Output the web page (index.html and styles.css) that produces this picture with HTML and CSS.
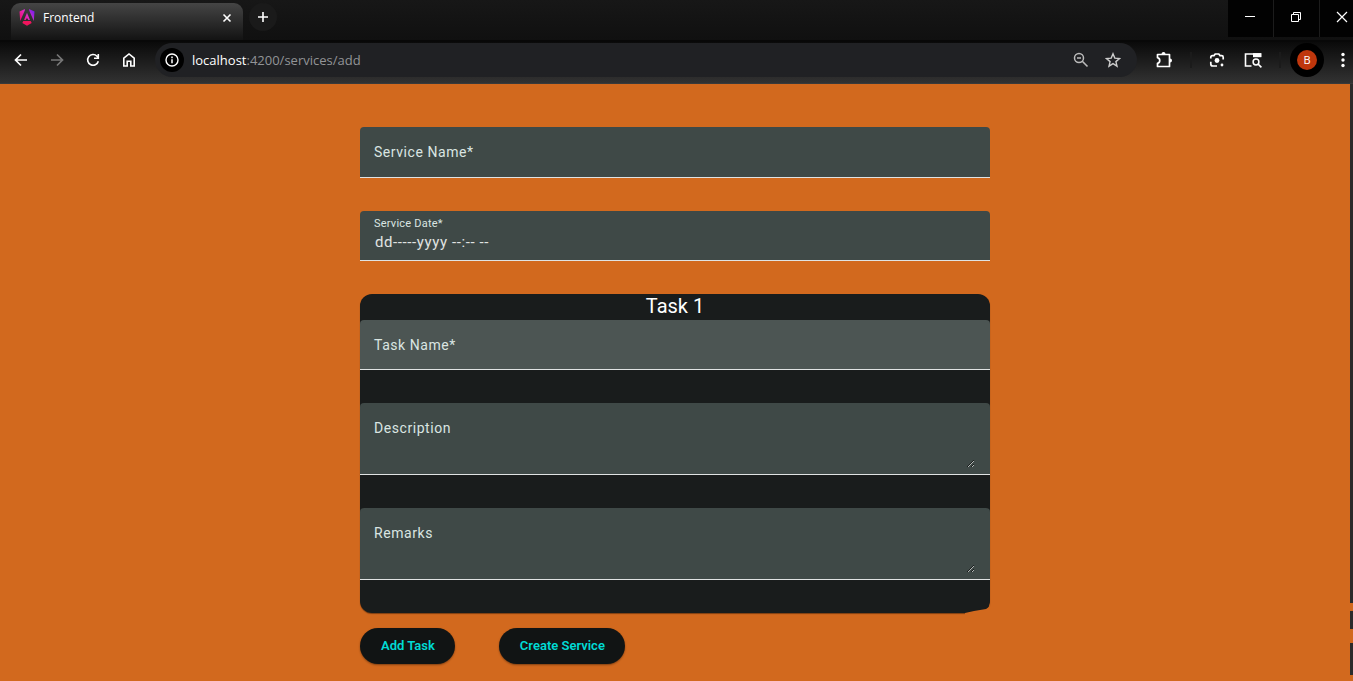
FILE: index.html
```html
<!DOCTYPE html>
<html lang="en">
<head>
<meta charset="utf-8">
<title>Frontend</title>
<link rel="stylesheet" href="styles.css">
</head>
<body>
<header class="browser">
  <div class="tabstrip">
    <div class="tab">
      <svg class="tab-logo" width="16" height="17" viewBox="0 0 16 17" aria-hidden="true">
        <defs><linearGradient id="ng" x1="0" y1="0.6" x2="1" y2="0.1"><stop offset="0" stop-color="#f0107c"/><stop offset="0.45" stop-color="#e02fc4"/><stop offset="1" stop-color="#6a1cf0"/></linearGradient></defs>
        <path fill="url(#ng)" d="M6 0 0.5 2.6 1.2 12 5.8 1.4zM10 0l5.5 2.6L14.8 12 10.2 1.4zM8 3.8 5 11h1.8l.6-1.6h1.2L9.2 11H11z"/>
        <path fill="#f0145c" d="M4.3 12h7.4l1 2L8 16.8 3.3 14z"/>
      </svg>
      <span class="tab-title">Frontend</span>
      <button class="icon-btn tab-close" aria-label="Close tab"><svg width="10" height="10" viewBox="0 0 10 10"><path d="M1.5 1.5l7 7M8.5 1.5l-7 7" stroke="#fff" stroke-width="1.6"/></svg></button>
    </div>
    <button class="icon-btn new-tab" aria-label="New tab"><svg width="12" height="12" viewBox="0 0 12 12"><path d="M6 1v10M1 6h10" stroke="#fff" stroke-width="1.6"/></svg></button>
    <div class="window-controls">
      <button class="win-btn" aria-label="Minimize"><svg width="12" height="12" viewBox="0 0 12 12"><path d="M1 5.5h10" stroke="#fff"/></svg></button>
      <button class="win-btn" aria-label="Restore"><svg width="12" height="12" viewBox="0 0 12 12"><path d="M1.5 3.500h7v7h-7zM3.500 3.500v-2h7v7h-2" fill="none" stroke="#fff"/></svg></button>
      <button class="win-btn win-close" aria-label="Close"><svg width="12" height="12" viewBox="0 0 12 12"><path d="M1 1l10 10M11 1L1 11" stroke="#fff" stroke-width="1.2"/></svg></button>
    </div>
  </div>
  <div class="toolbar">
    <nav class="nav" aria-label="Browser">
      <button class="icon-btn" aria-label="Back"><svg width="16" height="16" viewBox="0 0 16 16"><path d="M14 8H3M8 2.500 2.500 8 8 13.500" fill="none" stroke="#fff" stroke-width="1.700"/></svg></button>
      <button class="icon-btn" aria-label="Forward"><svg width="16" height="16" viewBox="0 0 16 16"><path d="M2 8h11M8 2.500 13.500 8 8 13.500" fill="none" stroke="#777" stroke-width="1.700"/></svg></button>
      <button class="icon-btn" aria-label="Reload"><svg width="16" height="16" viewBox="0 0 16 16"><path d="M13.300 9.200a5.400 5.400 0 1 1-1.300-5L13.500 5.800M13.300 2v4.300H9" fill="none" stroke="#fff" stroke-width="1.600"/></svg></button>
      <button class="icon-btn" aria-label="Home"><svg width="16" height="16" viewBox="0 0 16 16"><path d="M2.800 14V6.200L8 2l5.200 4.200V14H9.800V9.200H6.200V14z" fill="none" stroke="#fff" stroke-width="1.600"/></svg></button>
    </nav>
    <div class="address">
      <button class="site-info" aria-label="Site information"><svg width="14" height="14" viewBox="0 0 14 14"><circle cx="7" cy="7" r="6" fill="none" stroke="#fff" stroke-width="1.400"/><path d="M7 6.200V10.200M7 3.600v1.600" stroke="#fff" stroke-width="1.500"/></svg></button>
      <span class="url"><b>localhost</b>:4200/services/add</span>
      <button class="icon-btn small" aria-label="Zoom"><svg width="16" height="16" viewBox="0 0 16 16"><circle cx="6" cy="6" r="4.500" fill="none" stroke="#bbb" stroke-width="1.500"/><path d="M9.300 9.300l5.200 5.200M4 6h4" stroke="#bbb" stroke-width="1.600"/></svg></button>
      <button class="icon-btn small" aria-label="Bookmark"><svg width="16" height="16" viewBox="0 0 16 16"><path d="M8 1.800l1.800 4.300 4.700.4-3.600 3.100 1.100 4.600L8 11.700l-4 2.500 1.100-4.600L1.500 6.500l4.700-.4z" fill="none" stroke="#ccc" stroke-width="1.400"/></svg></button>
    </div>
    <div class="tools">
      <button class="icon-btn" aria-label="Extensions"><svg width="18" height="18" viewBox="0 0 18 18"><path d="M2.500 3.500h12v12h-12v-3.200c3-.5 3-5 0-5.600z" fill="none" stroke="#fff" stroke-width="1.700" stroke-linejoin="round"/><path d="M6.500 3a2 2 0 0 1 4 0zM15 7.500a2 2 0 0 1 0 4z" fill="#fff"/></svg></button>
      <span class="divider"></span>
      <button class="icon-btn lens" aria-label="Search with Lens"><svg width="16" height="16" viewBox="0 0 16 16"><path d="M1.800 6.500V5.200Q1.800 3.600 3.400 3.600H5L6.200 2h3.600L11 3.600h1.600Q14.200 3.600 14.200 5.200V7.500M1.800 9.800v2.200Q1.800 14 3.800 14H8" fill="none" stroke="#fff" stroke-width="1.700"/><circle cx="8" cy="8.500" r="2.400" fill="#fff"/><circle cx="13" cy="13" r="1.400" fill="#fff"/></svg></button>
      <button class="icon-btn" aria-label="Side search"><svg width="18" height="16" viewBox="0 0 18 16"><path d="M7.500 14H1.500V2H16.500v3" fill="none" stroke="#fff" stroke-width="1.600"/><path d="M9 1.200h8.300v4H9z" fill="#fff"/><circle cx="12" cy="10" r="2.900" fill="none" stroke="#fff" stroke-width="1.500"/><path d="M14 12l3.400 3.400" stroke="#fff" stroke-width="1.700"/></svg></button>
      <span class="divider"></span>
      <button class="profile" aria-label="Profile"><span class="avatar">B</span></button>
      <button class="icon-btn menu" aria-label="Menu"><svg width="4" height="16" viewBox="0 0 4 16" fill="#fff"><circle cx="2" cy="2.500" r="1.700"/><circle cx="2" cy="8" r="1.700"/><circle cx="2" cy="13.500" r="1.700"/></svg></button>
    </div>
  </div>
</header>
<div class="viewport">
  <main class="page">
    <form class="service-form">
      <div class="field field-lead">
        <label class="field-label" for="service-name">Service Name*</label>
        <input class="field-input" id="service-name" type="text">
      </div>
      <div class="field">
        <label class="field-label floated" for="service-date">Service Date*</label>
        <input class="field-input dated" id="service-date" type="text" value="dd-----yyyy --:-- --">
      </div>
      <section class="task-card">
        <h2 class="task-title">Task 1</h2>
        <div class="task-fields">
          <div class="field active">
            <label class="field-label" for="task-name">Task Name*</label>
            <input class="field-input" id="task-name" type="text">
          </div>
          <div class="field area">
            <label class="field-label" for="description">Description</label>
            <textarea class="field-input" id="description"></textarea>
          </div>
          <div class="field area">
            <label class="field-label" for="remarks">Remarks</label>
            <textarea class="field-input" id="remarks"></textarea>
          </div>
        </div>
      </section>
      <div class="actions">
        <button class="action" type="button">Add Task</button>
        <button class="action" type="button">Create Service</button>
      </div>
    </form>
  </main>
  <div class="edge" aria-hidden="true">
    <span class="edge-main"></span><span class="edge-mid"></span><span class="edge-low"></span>
  </div>
</div>
</body>
</html>
```
FILE: styles.css
```css
* { box-sizing: border-box; }
body {
  margin: 0;
  min-height: 100vh;
  display: flex;
  flex-direction: column;
  background: #d2691e;
  font-family: Roboto, "Liberation Sans", sans-serif;
}
button { border: 0; padding: 0; background: none; font: inherit; }
svg { display: block; }

/* Browser chrome */
.browser { font-family: "Open Sans", "Noto Sans", sans-serif; color: #fff; }
.tabstrip {
  display: flex;
  height: 42px;
  padding-left: 11px;
  background: linear-gradient(#171717, #101010);
  border-bottom: 2px solid #080808;
}
.tab {
  display: flex;
  align-items: center;
  width: 232px;
  height: 37px;
  margin-top: 3px;
  padding: 0 6px 8px 8px;
  border-radius: 9px 9px 0 0;
  background: linear-gradient(#454545, #131313);
}
.tab-title { flex: 1; margin-left: 8px; font-size: 12px; line-height: 16px; }
.icon-btn { display: flex; align-items: center; justify-content: center; width: 36px; height: 34px; }
.tab-close { width: 20px; height: 20px; }
.new-tab { width: 28px; height: 28px; margin: 3px 0 0 6px; border-radius: 50%; background: #1a1a1a; }
.window-controls { display: flex; gap: 1px; margin-left: auto; height: 37px; background: #1c1c1c; }
.win-btn { display: flex; align-items: center; justify-content: center; width: 45px; padding: 0 2px 4px 0; background: #020202; }
.win-close { width: 33px; padding: 0 0 4px 11px; }
.toolbar {
  display: flex;
  height: 42px;
  padding: 1px 0 6px 3px;
  background: linear-gradient(#0a0a0a, #323232);
  border-bottom: 1px solid #3a3a3a;
}
.nav { display: flex; }
.address {
  flex: 1;
  display: flex;
  align-items: center;
  margin-left: 8px;
  padding: 0 8px 0 5px;
  border-radius: 17px;
  background: #202124;
}
.site-info { display: flex; align-items: center; justify-content: center; width: 24px; height: 24px; border-radius: 50%; background: #000; }
.url { flex: 1; margin-left: 8px; font-size: 13px; line-height: 20px; color: #929497; }
.url b { font-weight: 400; color: #fff; }
.small { width: 32px; }
.tools { display: flex; align-items: center; padding-left: 9px; }
.divider { width: 2px; height: 16px; margin: 0 8px; background: #1b1b1b; }
.lens { margin-left: -1px; }
.profile { display: flex; align-items: center; justify-content: center; width: 34px; height: 34px; margin-left: 1px; border-radius: 50%; background: #000; }
.avatar { width: 20px; height: 20px; border-radius: 50%; background: #bf360c; color: #fff; font-size: 11px; line-height: 20px; text-align: center; }
.menu { width: 10px; margin: 0 5px 0 14px; }

/* Page */
.viewport { flex: 1; display: flex; }
.page { flex: 1; padding: 43px 16px 16px; }
.service-form { display: flex; flex-direction: column; gap: 33px; max-width: 630px; margin: 0 auto; }
.field {
  position: relative;
  height: 50px;
  padding: 0 14px;
  border-bottom: 1px solid #e0e3e3;
  border-radius: 4px 4px 0 0;
  background: #3f4947;
}
.field-lead { height: 51px; }
.active { background: #4c5553; }
.area { height: 72px; padding: 15px 15px 0 14px; }
.field-label {
  position: absolute;
  top: 15px;
  left: 14px;
  font-size: 14px;
  line-height: 20px;
  letter-spacing: 0.04em;
  color: #dae5e2;
  pointer-events: none;
}
.floated { top: 5px; font-size: 11px; line-height: 15px; letter-spacing: 0.02em; }
.field-input {
  display: block;
  width: 100%;
  height: 100%;
  padding: 0;
  border: 0;
  outline: 0;
  background: transparent;
  color: #e0e3e2;
  font: 15px/20px Roboto, sans-serif;
  letter-spacing: 0.04em;
}
.dated { padding: 13px 0 0 1px; }
textarea.field-input { height: 50px; resize: vertical; }

.task-card {
  position: relative;
  padding-bottom: 33px;
  border-radius: 12px;
  background: #191c1c;
  box-shadow: 0 1px 1px #00000066;
}
.task-card::after {
  content: "";
  position: absolute;
  right: 0;
  bottom: -2px;
  width: 25px;
  height: 12px;
  background: #d2691e;
  clip-path: polygon(0 84%, 36% 67%, 84% 50%, 96% 33%, 100% 0, 100% 100%, 0 100%);
}
.task-title { margin: 0; padding-bottom: 2px; font-size: 20px; line-height: 24px; font-weight: 400; text-align: center; color: #fff; }
.task-fields { display: flex; flex-direction: column; gap: 33px; }
.actions { display: flex; gap: 44px; margin-top: -18px; }
.action {
  height: 36px;
  padding: 0 20px 1px 21px;
  border-radius: 18px;
  background: #111414;
  color: #00dbd5;
  font-size: 13px;
  font-weight: 600;
  box-shadow: 0 1px 2px #00000066;
}

/* Right window edge */
.edge { display: flex; flex-direction: column; width: 3px; }
.edge span { background: #2b2b2b; }
.edge-main { flex: 1; }
.edge-mid { height: 18px; margin: 8px 0 14px; }
.edge-low { height: 32px; margin-bottom: 6px; }
```
